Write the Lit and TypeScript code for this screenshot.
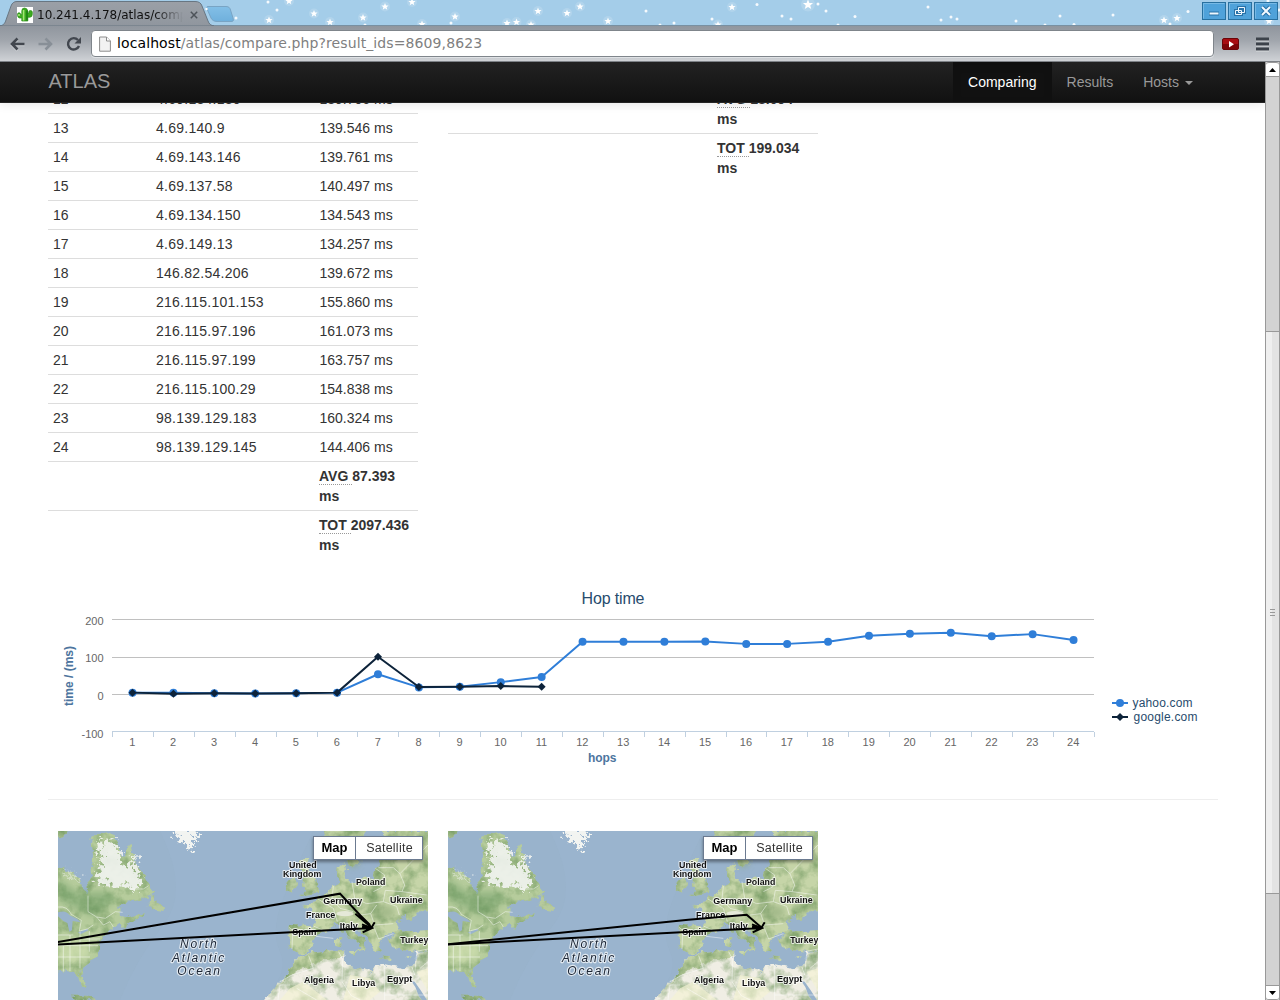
import { LitElement, html, css, svg } from "lit";
import { customElement, property } from "lit/decorators.js";

type Hop = [number, string, string];

const HOPS: Hop[] = [
  [12, "4.69.134.130", "139.706 ms"],
  [13, "4.69.140.9", "139.546 ms"],
  [14, "4.69.143.146", "139.761 ms"],
  [15, "4.69.137.58", "140.497 ms"],
  [16, "4.69.134.150", "134.543 ms"],
  [17, "4.69.149.13", "134.257 ms"],
  [18, "146.82.54.206", "139.672 ms"],
  [19, "216.115.101.153", "155.860 ms"],
  [20, "216.115.97.196", "161.073 ms"],
  [21, "216.115.97.199", "163.757 ms"],
  [22, "216.115.100.29", "154.838 ms"],
  [23, "98.139.129.183", "160.324 ms"],
  [24, "98.139.129.145", "144.406 ms"],
];

const YAHOO = [5, 5, 3.5, 3, 3.5, 5, 54, 19, 20.5, 33, 46.5, 140.5, 140.5, 140.5, 141.5, 135, 135, 140.5, 156.5, 162, 164.5, 155.5, 161, 145.5];
const GOOGLE = [5, 2, 3.5, 3, 3.5, 5, 100.5, 20, 20.5, 22.5, 20.5];

@customElement("window-titlebar")
export class WindowTitlebar extends LitElement {
  static styles = css`
    :host { display: block; position: relative; height: 26px; background: #a4cde9; font-family: "DejaVu Sans", sans-serif; overflow: hidden; }
    .backdrop { position: absolute; left: 0; top: 0; }
    .row { position: relative; display: flex; height: 26px; align-items: flex-start; }
    .tab { display: flex; align-items: center; width: 186px; padding: 6px 0 0 17px; height: 18px; }
    .title { width: 150px; margin-left: 4px; font-size: 12px; line-height: 18px; white-space: nowrap; overflow: hidden; color: #111;
      -webkit-mask-image: linear-gradient(90deg, #000 118px, transparent 146px); mask-image: linear-gradient(90deg, #000 118px, transparent 146px); }
    .close { margin-left: 3px; }
    .buttons { display: flex; gap: 2px; margin-left: auto; padding: 2px 2px 0 0; }
    .btn { display: block; width: 24px; height: 18px; }
  `;
  star(x: number, y: number, s = 1) {
    return svg`<g transform="translate(${x} ${y}) scale(${s})"><circle r="5" fill="#fff" opacity=".15"/><path fill="#fff" d="M0-3.6 1-1.1 3.6-1 1.6.7 2.3 3.3 0 1.8-2.3 3.3-1.6.7-3.6-1-1-1.1Z"/></g>`;
  }
  render() {
    const stars = [[269, 20], [289, 1], [314, 13.5], [330, 22], [363, 17.5], [385, 6.500], [412, 2], [422, 24], [455, 16.5], [507, 23], [516.5, 22], [531, 24.5], [538, 11], [567, 13], [580, 6.500], [608, 21], [718, 24.5], [732, 7], [808, 4.5, 1.4], [1164, 20], [1177, 18], [1269, 21]];
    const dots = [[268, 2], [277, 10], [236, 18], [365, 25], [451, 23], [646, 11], [660, 25], [674, 23], [712, 19], [757, 4.5], [782, 16], [791, 19], [818, 4], [826, 11], [838, 25], [855, 16.5], [928, 7], [941, 20], [951, 17], [957, 19], [1016, 21], [1045, 25], [1060, 16], [1074, 24.5], [1113, 15], [1170, 24], [1188, 11.5], [1268, 1], [1279, 10]];
    return html`
      <svg class="backdrop" width="1280" height="26">
        <defs>
          <linearGradient id="t" x1="0" y1="0" x2="0" y2="1"><stop offset="0" stop-color="#9ba0a7"/><stop offset="1" stop-color="#90969e"/></linearGradient>
          <linearGradient id="n" x1="0" y1="0" x2="0" y2="1"><stop offset="0" stop-color="#83bfe7"/><stop offset="1" stop-color="#6fb0dc"/></linearGradient>
        </defs>
        ${dots.map(([x, y]) => svg`<circle cx=${x} cy=${y} r="1.5" fill="#fff" opacity=".9"/>`)}
        ${stars.map(([x, y, s]) => this.star(x, y, s ?? 1))}
        <path d="M0 25.5H1280" stroke="#7890a2"/>
        <path d="M0 26C4 25 5 23 6 20L11 6C12 3 14 1.500 17 1.500H195C199 1.500 201 3 202 6L208 21C209 24 211 25.500 214 26Z" fill="url(#t)" stroke="#687682"/>
        <path d="M208 6.500H226C229 6.500 230 8 230.500 10L233 18C234 21 233 21.500 231 21.500H217C214 21.500 212 20 211 18L207.500 10C206 7.500 206.500 6.500 208 6.500Z" fill="url(#n)" stroke="#79a4c4"/>
        <circle cx="206.500" cy="9" r="1.200" fill="#fff"/>
      </svg>
      <div class="row">
        <div class="tab">
          <svg width="16" height="16" viewBox="0 0 16 16">
            <rect width="16" height="16" fill="#fff"/>
            <path d="M4.800 14V11H2.500Q.6 10.500.6 8.500V7Q.6 5.800 2 5.800T3.500 7V7.500H4.800V4Q4.800 1 7.500 1T10.800 4V6H12V4.500Q12 3.500 13.600 3.500T15.300 5V7.500Q15.300 10 13 10.200H10.800V14Z" fill="#3bab1f" stroke="#2a8a18" stroke-width=".7"/>
            <path d="M6.600 3V13.500M2 7V9" stroke="#a5e676" stroke-width="1.600"/>
            <path d="M10 3.500V13.500" stroke="#14700f" stroke-width="1.200"/>
          </svg>
          <span class="title">10.241.4.178/atlas/compare.php</span>
          <svg class="close" width="8" height="8" viewBox="0 0 8 8"><path d="M.8.8 7.200 7.200M7.200.8.8 7.200" stroke="#4d5359" stroke-width="1.500"/></svg>
        </div>
        <div class="buttons">
          ${[
            svg`<path d="M7 11.500H17" stroke="#2872a8" stroke-width="4"/><path d="M7.500 11.500H16.500" stroke="#eef8ff" stroke-width="2"/>`,
            svg`<path d="M10.500 5.500H16.500V10.500H10.500Z M7.500 8.500H13.500V12.500H7.500Z" fill="#4fa0d8" stroke="#2872a8" stroke-width="3"/><path d="M10.500 5.500H16.500V10.500H10.500ZM7.500 8.500H13.500V12.500H7.500Z" fill="none" stroke="#eef8ff"/>`,
            svg`<path d="M8 5 16 13M16 5 8 13" stroke="#2872a8" stroke-width="4"/><path d="M8 5 16 13M16 5 8 13" stroke="#f4faff" stroke-width="2"/>`,
          ].map((g) => html`<svg class="btn" viewBox="0 0 24 18"><rect x=".5" y=".5" width="23" height="17" fill="#4fa2da" stroke="#28709f"/><path d="M1.500 16.500V1.500H22.500" fill="none" stroke="#76b9e5"/>${g}</svg>`)}
        </div>
      </div>`;
  }
}

@customElement("browser-toolbar")
export class BrowserToolbar extends LitElement {
  static styles = css`
    :host { display: flex; align-items: center; height: 36px; box-sizing: border-box; background: linear-gradient(#90969e, #a0a5ac 40%, #cfd2d6); border-bottom: 1px solid #7e8287; font-family: "DejaVu Sans", sans-serif; }
    .nav { display: block; }
    .omni { display: flex; align-items: center; box-sizing: border-box; width: 1123px; height: 27px; margin-left: 1px; padding-left: 7px; background: #fff; border: 1px solid #7f858b; border-radius: 4px; box-shadow: 0 1px 0 #dfe2e5; }
    .url { margin-left: 6px; font-size: 14px; line-height: 24px; letter-spacing: .105px; color: #808080; white-space: nowrap; transform: translateY(-1px); }
    .host { color: #000; }
  `;
  render() {
    return html`
      <svg class="nav" width="90" height="34" viewBox="0 0 90 34">
        <g fill="none" stroke-width="2.600" transform="translate(0 -.5)">
          <path d="M17.500 12 12 17.500 17.500 23M12 17.500H24.500" stroke="#d0d3d7" transform="translate(0 1)"/>
          <path d="M17.500 12 12 17.500 17.500 23M12 17.500H24.500" stroke="#42474f"/>
          <path d="M45.500 12 51 17.500 45.500 23M51 17.500H38.500" stroke="#888f97"/>
          <path d="M78 13.500A5.700 5.700 0 1 0 79 19.500" stroke="#42474f" stroke-width="2.400"/>
        </g>
        <path d="M81 10V16.500H74.500Z" fill="#42474f"/>
      </svg>
      <div class="omni">
        <svg width="12" height="16" viewBox="0 0 12 16"><path d="M.6 1H7.500L11.400 5V15.200H.6Z" fill="#f2f2f2" stroke="#8c8c8c"/><path d="M7.500 1V5H11.400" fill="#fff" stroke="#8c8c8c"/></svg>
        <span class="url"><span class="host">localhost</span>/atlas/compare.php?result_ids=8609,8623</span>
      </div>
      <svg width="66" height="34" viewBox="1214 26 66 34">
        <rect x="1222.500" y="37.500" width="16" height="11" rx="1.500" fill="#a80c12" stroke="#6b0509"/>
        <path d="M1223 43H1238V48H1223Z" fill="#7c0408"/>
        <path d="M1229 40 1234 43.200 1229 46.400Z" fill="#fff"/>
        <path d="M1256 39.500H1269M1256 44.500H1269M1256 49.500H1269" stroke="#d8dbde" stroke-width="2"/>
        <path d="M1256 38H1269M1256 43H1269M1256 48H1269" stroke="#3c424a" stroke-width="2.800"/>
      </svg>`;
  }
}

@customElement("hop-chart")
export class HopChart extends LitElement {
  static styles = css`
    :host { display: block; height: 200px; padding-left: 48px; }
    .chart { display: block; font-family: "Liberation Sans", Arial, sans-serif; font-size: 11px; }
    .tick { fill: #666; }
    .title { fill: #274b6d; font-size: 16px; }
    .axis { fill: #4d759e; font-size: 12px; font-weight: bold; }
    .key { fill: #274b6d; font-size: 12px; }
  `;
  px(i: number) { return 132.5 + i * 40.915; }
  py(v: number) { return 694.5 - v * 0.375; }
  line(values: number[], color: string) {
    return svg`<polyline fill="none" stroke=${color} stroke-width="2" stroke-linejoin="round" points=${values.map((v, i) => `${this.px(i)},${this.py(v)}`).join(" ")}/>`;
  }
  render() {
    return html`<svg class="chart" width="1170" height="200" viewBox="48 579 1170 200">
      <text class="title" x="581.500" y="604" textLength="63">Hop time</text>
      <path d="M112 619.500H1094M112 657.500H1094M112 694.500H1094" stroke="#c0c0c0"/>
      <path d="M112 731.500H1094" stroke="#c0d0e0"/>
      ${Array.from({ length: 25 }, (_, i) => svg`<path stroke="#c0d0e0" d="M${Math.round(112 + i * 40.9) + 0.5} 732V737"/>`)}
      ${[200, 100, 0, -100].map((v, i) => svg`<text class="tick" x="103.500" y=${[625, 662, 700, 738][i]} text-anchor="end">${v}</text>`)}
      ${Array.from({ length: 24 }, (_, i) => svg`<text class="tick" x=${this.px(i) - 0.3} y="746" text-anchor="middle">${i + 1}</text>`)}
      <text class="axis" x="588" y="762" textLength="28.500">hops</text>
      <text class="axis" transform="translate(72.500 706) rotate(-90)" textLength="60">time / (ms)</text>
      ${this.line(YAHOO, "#2f7ed8")}
      ${YAHOO.map((v, i) => svg`<circle cx=${this.px(i)} cy=${this.py(v)} r="4" fill="#2f7ed8"/>`)}
      ${this.line(GOOGLE, "#0d233a")}
      ${GOOGLE.map((v, i) => svg`<path transform="translate(${this.px(i)} ${this.py(v)})" d="M0-4 4 0 0 4-4 0Z" fill="#0d233a"/>`)}
      <path d="M1112 703H1128" stroke="#2f7ed8" stroke-width="2"/><circle cx="1120" cy="703" r="4" fill="#2f7ed8"/>
      <path d="M1112 717H1128" stroke="#0d233a" stroke-width="2"/><path d="M1120 713 1124 717 1120 721 1116 717Z" fill="#0d233a"/>
      <text class="key" x="1132.500" y="707" textLength="60">yahoo.com</text>
      <text class="key" x="1133.500" y="721" textLength="64">google.com</text>
    </svg>`;
  }
}

@customElement("route-map")
export class RouteMap extends LitElement {
  @property() route = "";
  static styles = css`
    :host { display: block; position: relative; width: 370px; height: 169px; overflow: hidden; font-family: "Liberation Sans", Arial, sans-serif; }
    .map { display: block; }
    .place { font-weight: bold; font-size: 28px; fill: #111; stroke: #fff; stroke-opacity: .75; stroke-width: 6px; paint-order: stroke; stroke-linejoin: round; }
    .sea { font-style: italic; font-size: 36px; fill: #1c2635; stroke: #fff; stroke-opacity: .7; stroke-width: 7px; paint-order: stroke; stroke-linejoin: round; }
    .types { position: absolute; right: 5px; top: 5px; display: flex; box-sizing: border-box; width: 110px; height: 24px; background: #fff; border: 1px solid #6b7a90; box-shadow: 0 2px 3px rgba(0, 0, 0, .4); font-size: 13px; line-height: 22px; text-align: center; color: #333; }
    .on { width: 41px; font-weight: bold; color: #000; border-right: 1px solid #6b7a90; }
    .off { flex: 1; font-size: 12.500px; letter-spacing: .25px; padding-left: 1px; }
  `;
  render() {
    const places: [string, number, number, number][] = [
      ["United", 717, 130, 83], ["Kingdom", 699, 157, 115], ["Poland", 918, 180, 88], ["Germany", 820, 237, 117],
      ["Ukraine", 1020, 234, 98], ["France", 768, 280, 88], ["Italy", 869, 312, 54], ["Spain", 727, 331, 72],
      ["Turkey", 1051, 355, 84], ["Algeria", 762, 474, 90], ["Libya", 906, 483, 70], ["Egypt", 1011, 472, 76],
    ];
    return html`
      <svg class="map" width="370" height="169" viewBox="24 18 1110 507">
        <defs>
          <filter id="rough" x="0" y="0" width="1158" height="543" filterUnits="userSpaceOnUse" color-interpolation-filters="sRGB">
            <feTurbulence type="fractalNoise" baseFrequency=".045" numOctaves="3" seed="4" result="n"/>
            <feDisplacementMap in="SourceGraphic" in2="n" scale="24" xChannelSelector="R" yChannelSelector="G" result="s"/>
            <feTurbulence type="fractalNoise" baseFrequency=".022" numOctaves="4" seed="8"/>
            <feColorMatrix values="0 0 0 0 .45  0 0 0 0 .6  0 0 0 0 .38  2 0 0 0 -.8"/>
            <feComposite in2="s" operator="in" result="shade"/>
            <feMerge><feMergeNode in="s"/><feMergeNode in="shade"/></feMerge>
          </filter>
          <filter id="snow" x="0" y="0" width="1158" height="543" filterUnits="userSpaceOnUse" color-interpolation-filters="sRGB">
            <feTurbulence type="fractalNoise" baseFrequency=".09" numOctaves="3" seed="3" result="n"/>
            <feDisplacementMap in="SourceGraphic" in2="n" scale="60" xChannelSelector="R" yChannelSelector="G"/>
          </filter>
          <filter id="soft" x="-.2" y="-.2" width="1.400" height="1.400"><feGaussianBlur stdDeviation="10"/></filter>
        </defs>
        <rect x="24" y="18" width="1110" height="507" fill="#99b3cc"/>
        <path d="M330 18Q420 200 340 300T210 525H640Q720 440 690 380T700 220T790 18Z" fill="#9cb5cf" opacity=".5"/>
        <g filter="url(#rough)">
          <path fill="#b6cc9c" d="M10 118 60 142 88 162 100 192 112 210 118 195 112 168 128 150 122 120 130 90 122 60 128 28 190 25 205 60 210 95 228 98 236 62 246 60 250 95 262 125 272 135 288 160 300 182 314 200 300 214 270 226 225 230 200 246 215 250 212 268 225 282 248 272 282 264 262 280 235 298 218 312 210 296 186 312 166 330 150 350 145 370 140 395 116 415 98 430 90 448 102 468 108 488 97 488 86 462 78 442 52 438 10 444Z"/>
          <path fill="#b7ca9d" d="M300 212 322 226 342 245 338 260 310 256 290 246ZM60 512 110 512 150 526 90 530ZM10 18H50L40 34 10 40Z"/>
          <path fill="#c6d5aa" d="M745 98 778 100 768 122 790 150 806 182 804 204 772 208 750 214 768 196 752 184 768 168 752 136ZM712 166 738 158 744 180 730 196 704 198ZM866 312 876 310 874 330ZM858 336 874 336 870 366 858 362ZM895 378 926 378 916 392ZM985 396 1022 400 1020 406ZM1062 396 1086 390 1076 402Z"/>
          <path fill="#c6d5a8" d="M716 300 792 304 798 272 786 252 756 246 766 238 792 236 804 220 832 204 850 180 868 176 860 148 864 122 884 112 888 136 880 160 896 172 930 166 966 156 976 132 990 118 984 96 1000 18H1150V262L1100 262 1092 286 1076 282 1070 266 1040 292 1046 312 1084 322 1150 316V378L1100 380 1060 376 1026 366 1018 346 1034 326 1006 330 1000 346 984 352 992 374 976 384 964 356 944 330 916 300 902 298 912 316 948 350 938 374 924 380 932 362 902 338 872 304 852 300 832 322 798 334 790 354 770 380 748 386 734 378 712 374 716 340ZM828 10H952L930 60 940 100 908 132 888 100 866 90 830 92 812 60Z"/>
          <path fill="#f0eee4" d="M745 392 800 380 882 374 884 402 896 422 932 428 962 444 976 420 1002 416 1060 430 1086 426 1096 400 1102 384 1150 376V540H632L670 492 696 466 720 442 726 418Z"/>
          <path fill="#c3d2a5" d="M745 392 800 380 882 374 880 398 830 402 790 420 740 440 700 470 720 442 726 418Z"/>
        </g>
        <path d="M720 490 760 470 800 500 830 525H690ZM900 450 960 460 990 500 960 525H880ZM1100 440 1134 430V500Z" fill="#f3f2d4" opacity=".7"/>
        <path d="M1082 466 1096 486 1106 512 1120 530H1134L1112 496 1094 470Z" fill="#99b3cc"/>
        <path d="M24 355 60 345 105 355 120 385 85 410 24 410Z" fill="#d3e2b2" opacity=".7" filter="url(#soft)"/>
        <path d="M24 160 80 200 180 200 200 225 130 275 24 225Z" fill="#6f9d66" opacity=".5" filter="url(#soft)"/>
        <g filter="url(#snow)" fill="#f2f4f1">
          <path d="M140 48 184 46 206 70 218 118 236 120 256 84 262 140 276 176 256 196 226 180 200 186 166 176 136 168 146 140 154 110Z" opacity=".9"/>
          <path d="M366 10 380 36 398 52 420 76 432 54 448 10Z"/><path d="M40 130 90 160 90 172 46 146Z" opacity=".45"/>
        </g>
        <g fill="#84a26f" opacity=".5" filter="url(#soft)"><ellipse cx="1000" cy="262" rx="36" ry="22"/><ellipse cx="910" cy="112" rx="18" ry="14"/><ellipse cx="960" cy="240" rx="24" ry="10"/></g>
        <ellipse cx="885" cy="266" rx="26" ry="8" fill="#eceee4" opacity=".8"/>
        <g fill="#99b3cc"><path d="M24 262Q48 254 58 270L82 282 92 292 68 288 66 316 58 320 52 294 40 288 24 274ZM84 322 112 312 116 316 92 328Z"/></g>
        <g fill="none" stroke="#fff" stroke-width="2" opacity=".7">
          <path d="M114 212V260L140 276 166 280 196 260 218 262M140 276 160 300 180 290 190 306M24 246Q52 242 64 268L94 286 88 318 112 312 130 300M24 362H144M24 396H120M60 330V438M90 320V430M118 318V380M40 362V440M24 330H70M236 192H280L296 182M100 342H150"/>
          <path d="M798 334 850 340M716 306 728 316 726 372M792 304 830 320M804 222 850 250 862 290M850 182 846 222 870 250 910 260M906 170 914 220 950 236M976 130 1004 150 998 186 970 200M985 128H1030L1050 146 1064 180 1056 200 1006 196M930 270 962 266 974 300 1030 296M1006 196 1000 230 1040 244 1048 270M1056 200 1130 210M1050 146 1134 60M950 236 1000 230M970 302 986 342 1030 326M962 266 980 240"/>
          <path d="M776 392 790 430 726 450 690 470M866 380 878 404 876 470 904 512 930 525M720 480H690L684 525M740 490 800 525M1004 420V525M1004 510H1134M1086 426 1094 450 1100 384M1110 430 1134 410M1094 380 1134 372"/>
        </g>
        ${places.map(([t, x, y, w]) => svg`<text class="place" x=${x} y=${y} textLength=${w} lengthAdjust="spacingAndGlyphs">${t}</text>`)}
        <text class="sea" x="390" y="369" textLength="110">North</text>
        <text class="sea" x="366" y="411" textLength="157">Atlantic</text>
        <text class="sea" x="382" y="450" textLength="128">Ocean</text>
        <g fill="none" stroke="#000" stroke-width="6"><path d=${this.route}/><path d="M20 359 966 309M936 298 966 309 938 322M974 292 964 309 936 305"/></g>
      </svg>
      <div class="types"><span class="on">Map</span><span class="off">Satellite</span></div>`;
  }
}

@customElement("app-root")
export class AppRoot extends LitElement {
  static styles = css`
    :host { display: block; width: 1280px; height: 1000px; overflow: hidden; background: #fff; color: #333; font: 14px/20px "Liberation Sans", Arial, sans-serif; }
    .view { display: flex; height: 938px; }
    .page { width: 1265px; height: 938px; overflow: hidden; }
    .navbar { position: relative; display: flex; align-items: center; justify-content: space-between; box-sizing: border-box; height: 41px; padding: 0 57px 0 48.500px; background: linear-gradient(#222, #111); border-bottom: 1px solid #252525; box-shadow: 0 1px 10px rgba(0, 0, 0, .1); color: #999; }
    .brand { font-size: 20px; line-height: 20px; padding-bottom: 2px; text-shadow: 0 -1px 0 rgba(0, 0, 0, .25); }
    .menu { display: flex; height: 40px; line-height: 40px; }
    .item { padding: 0 15px; }
    .active { color: #fff; background: #111; box-shadow: inset 0 3px 8px rgba(0, 0, 0, .125); }
    .caret { display: inline-block; margin-left: 6px; border: 4px solid transparent; border-top-color: #999; border-bottom: 0; vertical-align: middle; }
    .body { height: 897px; overflow: hidden; }
    .tables { display: flex; gap: 30px; margin: -19px 0 0 48px; align-items: flex-start; height: 495px; }
    .table { width: 370px; }
    .tr { display: grid; grid-template-columns: 103px 163.500px 103.500px; border-top: 1px solid #ddd; }
    .tr.total { grid-template-columns: 103px 163px 104px; }
    .second .tr.total { grid-template-columns: 103px 161px 106px; }
    .td { padding: 4px 5px; }
    .ip { letter-spacing: .25px; }
    .sum { font-weight: bold; padding-right: 0; white-space: nowrap; }
    .abbr { border-bottom: 1px dotted #999; }
    .rule { height: 1px; margin: 20px 47px 31px 48px; background: #eee; }
    .maps { display: flex; gap: 20px; margin-left: 58px; }
    .scroll { display: flex; flex-direction: column; box-sizing: border-box; width: 15px; background: #d3d3d3; border: solid #999; border-width: 0 1px; }
    .cap { display: block; box-sizing: border-box; height: 15px; background: #fff; border: 1px solid #999; border-width: 1px 0; border-radius: 3px 3px 0 0; }
    .cap.down { margin-top: auto; border-radius: 0 0 3px 3px; }
    .thumb { display: flex; flex-direction: column; gap: 2px; align-items: center; justify-content: center; box-sizing: border-box; height: 563px; margin-top: 254px; border: 1px solid #999; border-width: 1px 0; background: linear-gradient(90deg, #efefef 50%, #e3e3e3 50%); }
    .grip { width: 5px; height: 1px; background: #999; }
  `;
  sum(label: string, value: string) {
    return html`<div class="tr total"><span class="td"></span><span class="td"></span><span class="td sum"><span class="abbr">${label} </span>${value}<br>ms</span></div>`;
  }
  render() {
    return html`
      <window-titlebar></window-titlebar>
      <browser-toolbar></browser-toolbar>
      <div class="view">
        <div class="page">
          <div class="navbar">
            <span class="brand">ATLAS</span>
            <div class="menu"><span class="item active">Comparing</span><span class="item">Results</span><span class="item">Hosts<span class="caret"></span></span></div>
          </div>
          <div class="body">
            <div class="tables">
              <div class="table">
                ${HOPS.map(([n, ip, ms]) => html`<div class="tr"><span class="td">${n}</span><span class="td ip">${ip}</span><span class="td">${ms}</span></div>`)}
                ${this.sum("AVG", "87.393")}${this.sum("TOT", "2097.436")}
              </div>
              <div class="table second">${this.sum("AVG", "18.094")}${this.sum("TOT", "199.034")}</div>
            </div>
            <hop-chart></hop-chart>
            <div class="rule"></div>
            <div class="maps">
              <route-map route="M20 352 870 206 966 309M916 266 966 309M922 262 960 300"></route-map>
              <route-map route="M20 358 745 284 920 269 966 309"></route-map>
            </div>
          </div>
        </div>
        <div class="scroll">
          <svg class="cap" viewBox="0 0 13 13"><path d="M3 9 6.500 5 10 9Z"/></svg>
          <div class="thumb"><i class="grip"></i><i class="grip"></i><i class="grip"></i></div>
          <svg class="cap down" viewBox="0 0 13 13"><path d="M3 5 6.500 9 10 5Z"/></svg>
        </div>
      </div>`;
  }
}
